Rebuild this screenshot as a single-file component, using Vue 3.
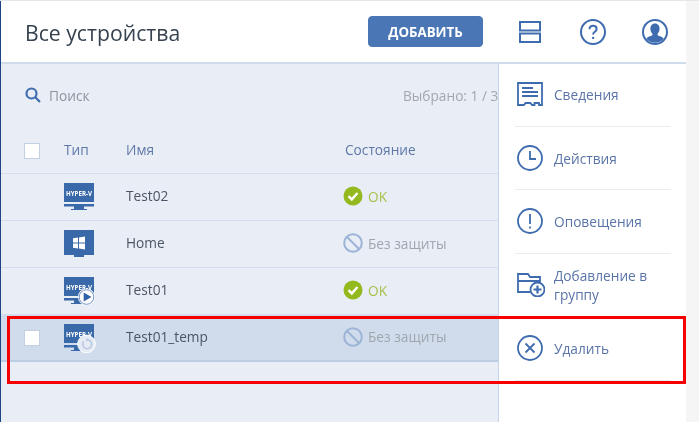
<script setup>
const rows = [
  { name: 'Test02', icon: 'hyper', status: 'ok' },
  { name: 'Home', icon: 'win', status: 'none' },
  { name: 'Test01', icon: 'play', status: 'ok' },
  { name: 'Test01_temp', icon: 'restore', status: 'none', selected: true },
]
</script>

<template>
  <div class="page">
    <div class="sheet">
      <header class="top">
        <h1 class="title">Все устройства</h1>
        <button class="add">ДОБАВИТЬ</button>
        <svg class="top-ico layout" viewBox="0 0 22 22" width="22" height="22"><rect x="1" y="1" width="20" height="8.5" /><rect x="1" y="12.5" width="20" height="8.5" /></svg>
        <svg class="top-ico help" viewBox="0 0 26 26" width="26" height="26"><circle cx="13" cy="13" r="12" /><path d="M9.5 10.2c0-2.2 1.6-3.5 3.6-3.5s3.500 1.300 3.500 3.200c0 2.900-3.500 2.900-3.500 5.600" /><circle class="solid" cx="13.100" cy="18.900" r="1.200" /></svg>
        <svg class="top-ico user" viewBox="0 0 26 26" width="26" height="26"><circle cx="13" cy="13" r="12" /><path class="solid" d="M13 4.500c3 0 4.600 2.400 4.600 5.300 0 2-.8 3.900-2 5v1.500c1.600 1 5.200 1.500 6 3.400a11 11 0 0 1-17.200 0c.8-1.900 4.400-2.400 6-3.400v-1.500c-1.200-1.100-2-3-2-5 0-2.900 1.600-5.300 4.600-5.300z" /></svg>
      </header>

      <div class="body">
        <section class="list">
          <div class="tools">
            <svg class="search" viewBox="0 0 16 16" width="16" height="16"><circle cx="6.500" cy="6.500" r="5" /><path d="M10.300 10.300 15 15" /></svg>
            <span class="search-text">Поиск</span>
            <span class="picked">Выбрано: 1 / 3</span>
          </div>
          <div class="row head">
            <span class="cell-check"><span class="box"></span></span>
            <span class="lift">Тип</span>
            <span class="lift">Имя</span>
            <span class="lift">Состояние</span>
          </div>
          <div v-for="r in rows" :key="r.name" class="row item" :class="{ selected: r.selected }">
            <span class="cell-check"><span v-if="r.selected" class="box"></span></span>
            <span class="dev">
              <svg viewBox="0 0 33 30" width="33" height="30">
                <template v-if="r.icon === 'win'">
                  <path class="mon" d="M1 1h30v25H21v2h-10v-2H1z" />
                  <path class="pane" d="M10 9.300 15 8.500v5H10zM16 8.400 22 7.500v6h-6zM10 14.500h5v5L10 18.700zM16 14.500h6v6l-6-.9z" />
                </template>
                <template v-else>
                  <path class="mon" d="M1 1h30v19H1zM1 22h30v2.500H21V27h3v1H8v-1h3v-2.500H1z" />
                  <text x="3" y="13.500" class="hv" textLength="26" lengthAdjust="spacingAndGlyphs">HYPER-V</text>
                  <template v-if="r.icon === 'play'">
                    <circle class="badge" cx="23.500" cy="21" r="8.500" />
                    <circle class="badge-line" cx="23.500" cy="21" r="7.300" />
                    <path class="play" d="M20.700 16.500 28.500 21l-7.800 4.500z" />
                  </template>
                  <template v-if="r.icon === 'restore'">
                    <circle class="badge-soft" cx="23.500" cy="21" r="8.800" />
                    <path class="spin" d="M20.800 18.200a4.500 4.500 0 1 0 3.500-1.500" />
                    <path class="spin-tip" d="M23.300 14.800v4l2.500-2z" />
                  </template>
                </template>
              </svg>
            </span>
            <span class="name lift">{{ r.name }}</span>
            <span class="state" :class="r.status">
              <svg v-if="r.status === 'ok'" viewBox="0 0 20 20" width="20" height="20"><circle class="ok-disc" cx="10" cy="10" r="9.500" /><path class="ok-tick" d="M5.500 10.200 8.800 13.400 14.500 7" /></svg>
              <svg v-else viewBox="0 0 20 20" width="20" height="20"><circle class="no-ring" cx="10" cy="10" r="8.800" /><path class="no-ring" d="M3.800 3.800 16.200 16.200" /></svg>
              <span>{{ r.status === 'ok' ? 'OK' : 'Без защиты' }}</span>
            </span>
          </div>
        </section>

        <aside class="side">
          <div class="act">
            <svg viewBox="0 0 26 24" width="26" height="24"><path d="M1 1h24v22h-3v-2h-4.500v2H15l-1.500-2h-5L7 23H1z" /><path d="M5 6h11M5 10h16M5 14h16" /></svg>
            <span>Сведения</span>
          </div>
          <div class="act">
            <svg viewBox="0 0 26 26" width="26" height="26"><circle cx="13" cy="13" r="12" /><path d="M13 6v8h6" /></svg>
            <span>Действия</span>
          </div>
          <div class="act">
            <svg viewBox="0 0 26 26" width="26" height="26"><circle cx="13" cy="13" r="12" /><path d="M13 6v10M13 18.500v2" /></svg>
            <span>Оповещения</span>
          </div>
          <div class="act">
            <svg viewBox="0 0 28 24" width="28" height="24"><path d="M20 19H1V1h10l2 3h10v5M1 8h22" /><circle class="plus-disc" cx="20.500" cy="16.500" r="7" /><path class="plus" d="M20.500 12.500v8M16.500 16.500h8" /></svg>
            <span>Добавление в<br />группу</span>
          </div>
          <div class="act last">
            <svg viewBox="0 0 26 26" width="26" height="26"><circle cx="13" cy="13" r="12" /><path d="M8.500 8.500l9 9M17.500 8.500l-9 9" /></svg>
            <span>Удалить</span>
          </div>
        </aside>
      </div>

      <div class="mark"></div>
    </div>
  </div>
</template>

<style>
html, body { margin: 0; padding: 0; background: #f5f5f5; }
</style>

<style scoped>
.page {
  box-sizing: border-box;
  width: 699px;
  height: 422px;
  overflow: hidden;
  background: #f5f5f5;
  border-top: 1px solid #e4e6ea;
  font-family: "Open Sans", "Noto Sans", sans-serif;
  filter: blur(0.35px);
}
.sheet {
  position: relative;
  box-sizing: border-box;
  width: 686px;
  height: 421px;
  border-left: 1px solid #1d4586;
  display: flex;
  flex-direction: column;
  background: #fff;
}
.top {
  box-sizing: border-box;
  height: 63px;
  flex: none;
  display: flex;
  align-items: center;
  border-bottom: 2px solid #cfdcec;
}
.title {
  margin: 1px 0 0 24px;
  font-size: 21.200px;
  font-weight: 400;
  color: #36424f;
  width: 343px;
  white-space: nowrap;
}
.add {
  width: 115px;
  height: 31px;
  padding: 0;
  border: 1px solid #4a76b5;
  border-radius: 4px;
  background: #4a76b5;
  color: #fff;
  font: 700 13.300px "Open Sans", sans-serif;
}
.top-ico { fill: none; stroke: #3f6cae; stroke-width: 2; flex: none; }
.top-ico .solid { fill: #3f6cae; stroke: none; }
.layout { margin-left: 36px; }
.help { margin-left: 39px; }
.user { margin-left: 36px; }

.body { flex: 1; display: flex; min-height: 0; }
.list {
  box-sizing: border-box;
  width: 498px;
  flex: none;
  background: #e8edf6;
  border-right: 1px solid #c5d4e8;
  overflow: hidden;
}
.tools {
  box-sizing: border-box;
  height: 64px;
  display: flex;
  align-items: center;
  padding: 0 0 2px 24px;
  white-space: nowrap;
  font-size: 13.700px;
}
.search { fill: none; stroke: #3f6cae; stroke-width: 2.200; flex: none; }
.search-text { margin-left: 8px; color: #8e949c; width: 354px; flex: none; }
.picked { color: #a3a7ad; flex: none; }
.row {
  display: grid;
  grid-template-columns: 63px 62px 219px 1fr;
  align-items: center;
  font-size: 13.700px;
  box-sizing: border-box;
  border-bottom: 1px solid #d4deee;
}
.lift { margin-top: -3px; }
.head { height: 46px; color: #5f78a8; }
.item { height: 47px; color: #4b5563; }
.selected { background: #d0dcec; border-bottom: 2px solid #bccde4; }
.cell-check { display: flex; padding-left: 23px; }
.box {
  box-sizing: border-box;
  width: 16px;
  height: 16px;
  background: #fff;
  border: 1px solid #c3d0e4;
}
.dev { display: flex; }
.dev svg { display: block; margin-left: -1px; }
.mon { fill: #3a69a9; }
.pane { fill: #fff; }
.hv { fill: #fff; font: 700 7.200px "Open Sans", sans-serif; }
.badge { fill: #fff; }
.badge-line { fill: none; stroke: #6f93c6; stroke-width: 1; }
.play { fill: #2f62a6; }
.badge-soft { fill: #e6ecf5; stroke: #fff; stroke-width: 1; }
.spin { fill: none; stroke: #b9c9e0; stroke-width: 1.600; }
.spin-tip { fill: #b9c9e0; }
.state { display: flex; align-items: center; gap: 5px; margin-left: -2px; margin-top: -2px; }
.state svg { flex: none; }
.state.ok { color: #a7c24c; }
.state.none { color: #a0a6ae; }
.ok-disc { fill: #93b91f; }
.ok-tick { fill: none; stroke: #fff; stroke-width: 2.400; }
.no-ring { fill: none; stroke: #9db4d6; stroke-width: 2; }

.side { flex: 1; padding: 0 15px 0 16px; margin-top: -1px; }
.act {
  box-sizing: border-box;
  height: 63.500px;
  display: flex;
  align-items: center;
  border-bottom: 1px solid #e8ebef;
  font-size: 13.700px;
  line-height: 19px;
  color: #5a74a8;
}
.act span { margin-top: 1px; }
.act svg {
  flex: none;
  margin-left: 2px;
  margin-right: 11px;
  fill: none;
  stroke: #3f6cae;
  stroke-width: 1.800;
}
.act svg[width="28"] { margin-right: 9px; }
.act .plus-disc { fill: #fff; }
.act .plus { stroke-width: 2.200; }
.mark {
  position: absolute;
  left: 6px;
  top: 315px;
  width: 679px;
  height: 68px;
  box-sizing: border-box;
  border: 3px solid #f80000;
  pointer-events: none;
}
</style>
